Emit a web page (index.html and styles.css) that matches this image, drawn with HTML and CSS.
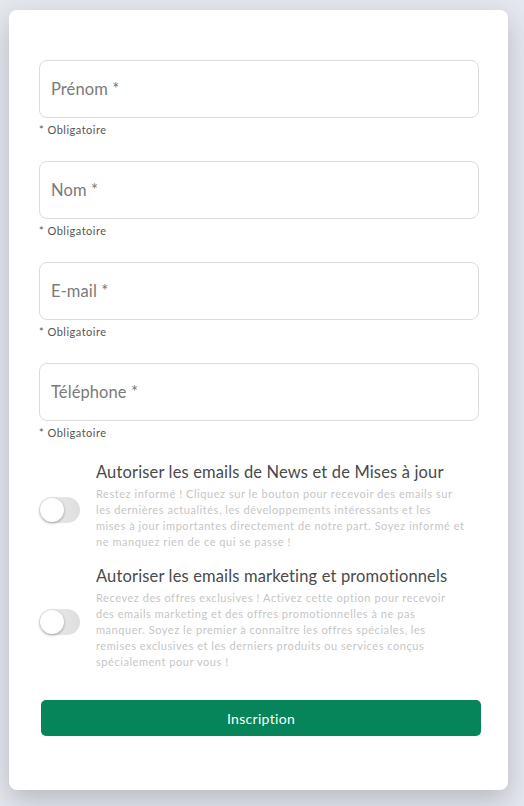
FILE: index.html
```html
<!DOCTYPE html>
<html lang="fr">
<head>
<meta charset="utf-8">
<link rel="stylesheet" href="styles.css">
</head>
<body>
<div class="card">
  <form class="form">
    <div class="field">
      <div class="input"><span class="ph">Prénom *</span></div>
      <div class="help">* Obligatoire</div>
    </div>
    <div class="field">
      <div class="input"><span class="ph">Nom *</span></div>
      <div class="help">* Obligatoire</div>
    </div>
    <div class="field">
      <div class="input"><span class="ph">E-mail *</span></div>
      <div class="help">* Obligatoire</div>
    </div>
    <div class="field">
      <div class="input"><span class="ph">Téléphone *</span></div>
      <div class="help">* Obligatoire</div>
    </div>
    <div class="opt">
      <div class="switch"><span class="knob"></span></div>
      <div class="opt-text">
        <div class="opt-title">Autoriser les emails de News et de Mises à jour</div>
        <div class="opt-desc">Restez informé ! Cliquez sur le bouton pour recevoir des emails sur<br>les dernières actualités, les développements intéressants et les<br>mises à jour importantes directement de notre part. Soyez informé et<br>ne manquez rien de ce qui se passe !</div>
      </div>
    </div>
    <div class="opt">
      <div class="switch"><span class="knob"></span></div>
      <div class="opt-text">
        <div class="opt-title">Autoriser les emails marketing et promotionnels</div>
        <div class="opt-desc">Recevez des offres exclusives ! Activez cette option pour recevoir<br>des emails marketing et des offres promotionnelles à ne pas<br>manquer. Soyez le premier à connaître les offres spéciales, les<br>remises exclusives et les derniers produits ou services conçus<br>spécialement pour vous !</div>
      </div>
    </div>
    <div class="btn">Inscription</div>
  </form>
</div>
</body>
</html>
```
FILE: styles.css
```css
html, body {
  margin: 0;
  padding: 0;
  background: #e6e8ef;
  font-family: "Lato", "Open Sans", sans-serif;
  height: 806px;
  overflow: hidden;
}
.card {
  margin: 10px 16px 0 9px;
  width: 499px;
  height: 780px;
  box-sizing: border-box;
  background: #fff;
  border-radius: 8px;
  box-shadow: 0 10px 28px rgba(60, 60, 70, 0.28);
  padding: 50px 29px 0 30px;
}
.form {
  display: flex;
  flex-direction: column;
}
.field {
  margin-bottom: 24px;
}
.input {
  height: 58px;
  box-sizing: border-box;
  border: 1px solid #dcdcdc;
  border-radius: 8px;
  display: flex;
  align-items: center;
  padding: 0 11px;
}
.ph {
  font-size: 16.5px;
  color: #7a7a7a;
  font-weight: 400;
  letter-spacing: 0.1px;
}
.help {
  margin-top: 5px;
  font-size: 11px;
  color: #555;
  line-height: 14px;
  letter-spacing: 0.5px;
}
.opt {
  display: flex;
  align-items: center;
  margin-top: -3px;
  margin-bottom: 18px;
}
.switch {
  width: 41px;
  height: 26px;
  border-radius: 13px;
  background: linear-gradient(90deg, #efefef, #dedede);
  position: relative;
  flex: none;
  margin-right: 16px;
  margin-top: 8px;
}
.knob {
  position: absolute;
  left: 1px;
  top: 1px;
  width: 24px;
  height: 24px;
  border-radius: 50%;
  background: #fff;
  box-shadow: 0 1px 3px rgba(0,0,0,0.35);
}
.opt-text {
  flex: 1;
  margin-right: -10px;
}
.opt-title {
  font-size: 16.5px;
  color: #4a4a4a;
  line-height: 22px;
  margin-bottom: 3px;
  letter-spacing: 0.15px;
}
.opt-desc {
  font-size: 11px;
  color: #c6c6c6;
  line-height: 16px;
  letter-spacing: 0.55px;
  white-space: nowrap;
}
.btn {
  margin: 12px -2px 0 2px;
  height: 36px;
  border-radius: 5px;
  background: #06855a;
  color: #fff;
  font-size: 14px;
  letter-spacing: 0.3px;
  display: flex;
  align-items: center;
  justify-content: center;
}
```
